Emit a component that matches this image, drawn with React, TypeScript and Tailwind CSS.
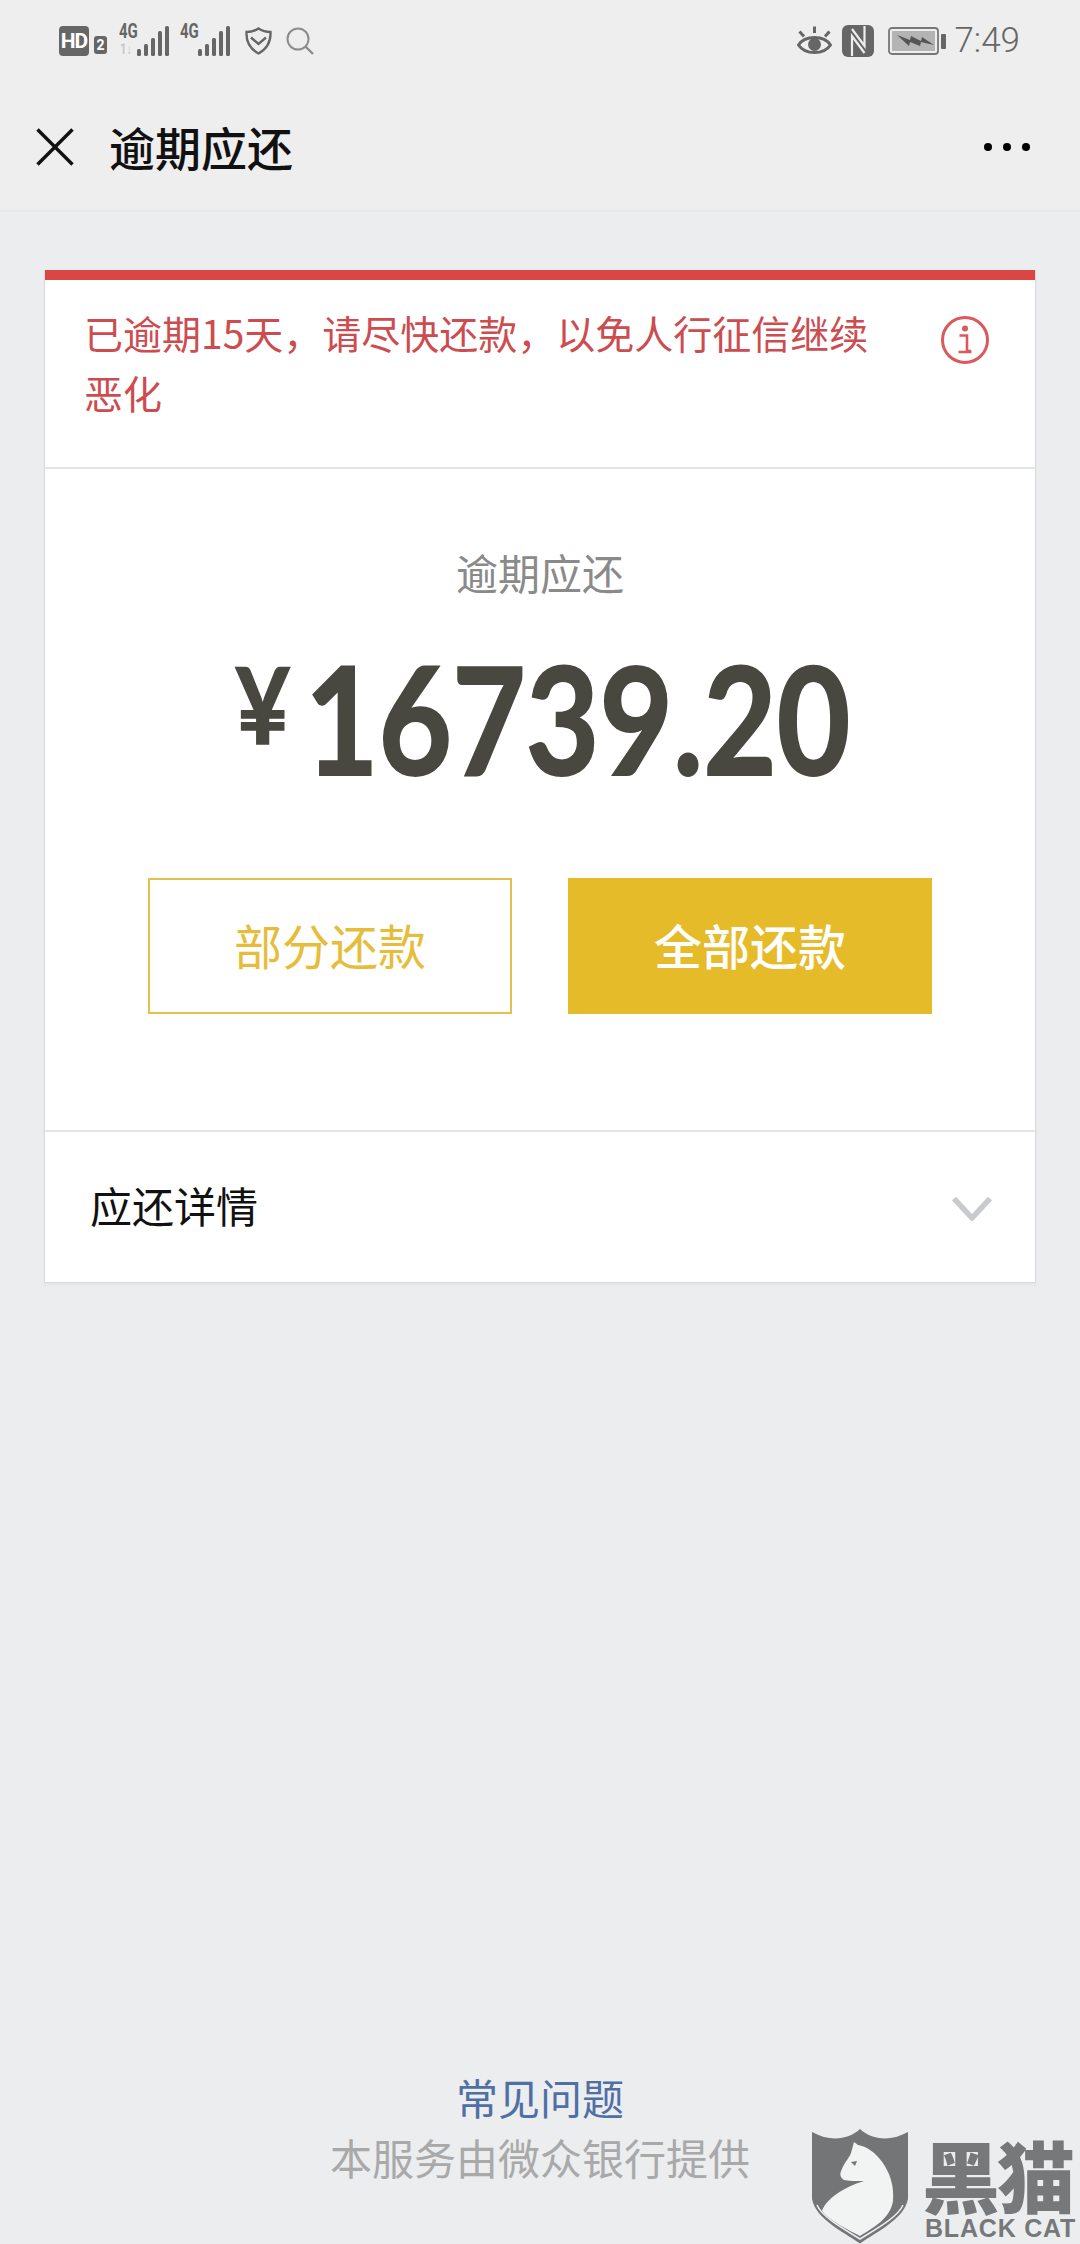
import React from "react";

const CJK = "font-['Noto_Sans_CJK_SC','Noto_Sans',sans-serif]";

function Signal({ dim }: { dim?: boolean }) {
  return (
    <div className="relative w-[50px] h-[32px]">
      <span className="absolute left-[-1px] top-[-4px] text-[20px] leading-[20px] font-bold text-[#666] font-['Roboto',sans-serif] scale-x-[0.75] origin-left">4G</span>
      {dim && <span className="absolute left-0 top-[17px] text-[14px] leading-[14px] font-bold text-[#c8c8c8] font-['Roboto',sans-serif] scale-x-[0.8] origin-left">1↓</span>}
      <svg width="50" height="32" viewBox="0 0 50 32" className="absolute left-0 top-0">
        <g fill="#666">
          <rect x="17" y="24" width="4" height="7" rx="1.500" />
          <rect x="24" y="19" width="4" height="12" rx="1.500" />
          <rect x="31" y="13" width="4" height="18" rx="1.500" />
          <rect x="38" y="6" width="4" height="25" rx="1.500" />
          <rect x="45" y="1" width="4" height="30" rx="1.500" />
        </g>
      </svg>
    </div>
  );
}

function StatusBar() {
  return (
    <div className="h-[75px] flex items-center justify-between pl-[59px] pr-[60px] pt-[6px]">
      <div className="flex items-center">
        <div className="w-[30px] h-[30px] rounded-[4px] bg-[#666] text-white text-[21px] font-bold leading-[30px] text-center font-['Roboto',sans-serif] tracking-[-1px] overflow-hidden">HD</div>
        <div className="ml-[5px] mt-[8px] w-[13px] h-[18px] rounded-[3px] bg-[#666] text-white text-[14px] font-bold leading-[18px] text-center font-['Roboto',sans-serif]">2</div>
        <div className="ml-[13px]"><Signal dim /></div>
        <div className="ml-[11px]"><Signal /></div>
        <svg className="ml-[14px]" width="27" height="28" viewBox="0 0 27 28" fill="none" stroke="#666">
          <path d="M13.500 1.500C9 4.500 5 5 1.500 5C1 15 5 22 13.500 26.500C22 22 26 15 25.500 5C22 5 18 4.500 13.500 1.500Z" strokeWidth="2.400" />
          <path d="M6 10.500L13.500 17L21 10.500" strokeWidth="2.400" />
        </svg>
        <svg className="ml-[14px]" width="28" height="28" viewBox="0 0 28 28" fill="none" stroke="#8c8c8c" strokeWidth="2">
          <circle cx="12" cy="12" r="10.500" />
          <path d="M19.500 19.500L27 27" strokeWidth="2.400" />
        </svg>
      </div>
      <div className="flex items-center">
        <svg width="35" height="30" viewBox="0 0 35 30" fill="none" stroke="#666">
          <path d="M1.500 19C8 9 27 9 33.500 19C27 29 8 29 1.500 19Z" strokeWidth="3" />
          <circle cx="17.500" cy="18.500" r="6.500" fill="#666" stroke="none" />
          <path d="M17.500 0.500V7M2.500 5.500L7 10.500M32.500 5.500L28 10.500" strokeWidth="3" />
        </svg>
        <svg className="ml-[10px]" width="32" height="32" viewBox="0 0 32 32">
          <rect width="32" height="32" rx="6" fill="#666" />
          <path d="M10 31V11L22.500 28M22.500 1V21L10 4" fill="none" stroke="#eeeeee" strokeWidth="2.200" />
        </svg>
        <svg className="ml-[14px]" width="58" height="28" viewBox="0 0 58 28">
          <rect x="1" y="1" width="49" height="26" rx="3" fill="none" stroke="#777" strokeWidth="1.800" />
          <rect x="4" y="4" width="43" height="20" fill="#b4b4b4" />
          <path d="M9 8L22 13L23 9L33 14L34 10L46 18L33 15L32 19L22 15L21 19Z" fill="#555" />
          <rect x="53" y="7" width="5" height="15" rx="1" fill="#666" />
        </svg>
        <span className="ml-[8px] text-[35px] leading-[36px] text-[#666] font-['Roboto',sans-serif] font-light">7:49</span>
      </div>
    </div>
  );
}

function NavBar() {
  return (
    <div className="h-[137px] border-b-2 border-[#e6e8ea] flex items-center justify-between pl-[36px] pr-[50px] pt-[9px]">
      <div className="flex items-center">
        <svg width="38" height="38" viewBox="0 0 38 38" fill="none" stroke="#111" strokeWidth="3.400">
          <path d="M1.500 1.500L36.500 36.500M36.500 1.500L1.500 36.500" />
        </svg>
        <span className={`ml-[35px] mt-[-2px] text-[46px] leading-[60px] font-medium text-[#111] ${CJK}`}>逾期应还</span>
      </div>
      <div className="flex gap-[11px]">
        <span className="w-[8px] h-[8px] rounded-full bg-black" />
        <span className="w-[8px] h-[8px] rounded-full bg-black" />
        <span className="w-[8px] h-[8px] rounded-full bg-black" />
      </div>
    </div>
  );
}

function Card() {
  return (
    <div className="ml-[44px] mt-[58px] w-[992px] bg-white border-x border-b border-[#d8dadc] shadow-[0_2px_3px_rgba(0,0,0,0.04)]">
      <div className="h-[10px] bg-[#da4545]" />
      <div className="h-[189px] border-b-2 border-[#e4e5e7] pl-[39px] pr-[46px] pt-[22px] flex justify-between items-start">
        <p className={`w-[800px] text-[39px] leading-[60px] text-[#cd4c50] ${CJK}`}>已逾期15天，请尽快还款，以免人行征信继续恶化</p>
        <svg className="mt-[14px] shrink-0" width="48" height="48" viewBox="0 0 48 48" fill="none">
          <circle cx="24" cy="24" r="22.500" stroke="#d9595c" strokeWidth="3" />
          <circle cx="24" cy="12.500" r="3" fill="#d9595c" />
          <path d="M18.500 19.500H26V35H30M17.500 36H30.500" stroke="#d9595c" strokeWidth="2.600" />
        </svg>
      </div>
      <div className="h-[661px] flex flex-col items-center pt-[73px]">
        <div className={`text-[42px] leading-[60px] text-[#8a8a8a] ${CJK}`}>逾期应还</div>
        <div className="mt-[30px] h-[170px] w-[611px] flex items-start text-[#484840] font-['Lato',sans-serif] font-bold">
          <span className="w-[70px] shrink-0 text-[106px] leading-[110px] mt-[16px] scale-x-[0.9] origin-left [-webkit-text-stroke:1.5px_#484840]">¥</span>
          <span className="text-[150px] leading-[170px] scale-x-[0.846] origin-left whitespace-nowrap [-webkit-text-stroke:2px_#484840]">16739.20</span>
        </div>
        <div className="mt-[76px] flex gap-[56px]">
          <div className={`w-[364px] h-[136px] pb-[4px] border-2 border-[#e6c04d] flex items-center justify-center text-[48px] text-[#e6bd3a] ${CJK}`}>部分还款</div>
          <div className={`w-[364px] h-[136px] pb-[4px] bg-[#e6bb2a] flex items-center justify-center text-[48px] font-medium text-white ${CJK}`}>全部还款</div>
        </div>
      </div>
      <div className="h-[152px] border-t-2 border-[#e4e5e7] pl-[45px] pr-[43px] pb-[4px] flex items-center justify-between">
        <span className={`text-[42px] leading-[60px] text-[#111] ${CJK}`}>应还详情</span>
        <svg width="40" height="24" viewBox="0 0 40 24" className="mt-[8px]" fill="none">
          <path d="M2 1.500L20 21L38 1.500" stroke="#c8cacd" strokeWidth="5.500" />
        </svg>
      </div>
    </div>
  );
}

function BlackCat() {
  return (
    <div className="absolute left-[812px] top-[2129px] w-[268px] h-[115px]">
      <svg width="96" height="115" viewBox="0 0 96 115" className="absolute left-0 top-0">
        <path d="M0 3C18 13 36 11 48 0C60 11 78 13 96 3V70C92 90 66 102 48 114.500C30 102 4 90 0 70Z" fill="#747577" />
        <path d="M42 13L46 16C62 18 84 42 81 72C78 90 62 98 48 107C36 101 18 92 10 82C14 70 32 58 52 52C44 52 36 52 32 51C26 47 29 42 30 40C32 34 38 28 39 24Z" fill="#f2f3f3" />
        <path d="M5 76C10 88 32 100 48 110C64 100 86 88 91 76" fill="none" stroke="#ebedef" strokeWidth="1.500" />
        <path d="M39 33L45 32L43 37Z" fill="#747577" />
      </svg>
      <span className={`absolute left-[110px] top-[6px] text-[78px] leading-[78px] font-black text-[#77787a] tracking-[-3px] whitespace-nowrap ${CJK}`}>黑猫</span>
      <span className="absolute left-[113px] top-[87px] text-[25px] leading-[25px] font-black text-[#77787a] whitespace-nowrap font-['Liberation_Sans',sans-serif] tracking-[0.8px]">BLACK CAT</span>
    </div>
  );
}

export default function App() {
  return (
    <div className={`relative w-[1080px] h-[2244px] overflow-hidden bg-[#ebedef] ${CJK}`}>
      <div className="bg-[#eeeeee]">
        <StatusBar />
        <NavBar />
      </div>
      <Card />
      <div className="mt-[784px] flex flex-col items-center">
        <div className={`text-[42px] leading-[60px] text-[#4f6fa5] ${CJK}`}>常见问题</div>
        <div className={`text-[42px] leading-[60px] text-[#a9a9a9] ${CJK}`}>本服务由微众银行提供</div>
      </div>
      <BlackCat />
    </div>
  );
}
